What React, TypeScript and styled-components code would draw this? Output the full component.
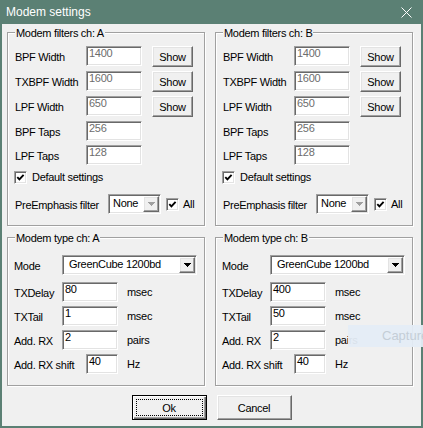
import React from 'react';
import styled, { createGlobalStyle, css } from 'styled-components';

interface FilterValues {
    bpfWidth: string;
    txbpfWidth: string;
    lpfWidth: string;
    bpfTaps: string;
    lpfTaps: string;
}

interface TypeValues {
    mode: string;
    txDelay: string;
    txTail: string;
    addRx: string;
    addRxShift: string;
}

interface Channel {
    name: string;
    filters: FilterValues;
    type: TypeValues;
}

const channels: Channel[] = [
    {
        name: 'A',
        filters: { bpfWidth: '1400', txbpfWidth: '1600', lpfWidth: '650', bpfTaps: '256', lpfTaps: '128' },
        type: { mode: 'GreenCube 1200bd', txDelay: '80', txTail: '1', addRx: '2', addRxShift: '40' },
    },
    {
        name: 'B',
        filters: { bpfWidth: '1400', txbpfWidth: '1600', lpfWidth: '650', bpfTaps: '256', lpfTaps: '128' },
        type: { mode: 'GreenCube 1200bd', txDelay: '400', txTail: '50', addRx: '2', addRxShift: '40' },
    },
];

const GlobalStyle = createGlobalStyle`
    html, body {
        margin: 0;
        padding: 0;
        background: #f0f0f0;
    }
    body {
        font-family: "Liberation Sans", Arial, sans-serif;
        font-size: 11px;
        letter-spacing: -0.3px;
        color: #000;
    }
    * {
        box-sizing: border-box;
    }
`

const Window = styled.div`
    position: relative;
    width: 423px;
    height: 428px;
    display: flex;
    flex-direction: column;
    background: #f0f0f0;
    border: 2px solid #5b8074;
    border-top: none;
`
const TitleBar = styled.div`
    flex: none;
    height: 24px;
    display: flex;
    align-items: center;
    justify-content: space-between;
    margin: 0 -2px;
    padding: 0 11px 0 6px;
    background: #5b8074;
    color: #fff;
    font-size: 12px;
    letter-spacing: 0;
`
const TitleText = styled.span`
    line-height: 16px;
`
const Body = styled.div`
    display: grid;
    grid-template-columns: 198px 198px;
    grid-template-rows: 194px 149px;
    column-gap: 10px;
    row-gap: 11px;
    padding: 8px 0 0 5px;
`
const Group = styled.div<{ $padTop: number; $padLeft: number }>`
    position: relative;
    display: flex;
    flex-direction: column;
    padding: ${p => p.$padTop}px 0 0 ${p => p.$padLeft}px;
    border: 1px solid #a0a0a0;
    box-shadow: 1px 1px 0 #fff, inset 1px 1px 0 #fff;
`
const Caption = styled.span`
    position: absolute;
    top: -6px;
    left: 7px;
    padding: 0 1px;
    line-height: 13px;
    background: #f0f0f0;
    white-space: nowrap;
`
const Stack = styled.div<{ $top?: number }>`
    display: flex;
    flex-direction: column;
    gap: 4px;
    margin-top: ${p => p.$top ?? 0}px;
`
const Row = styled.div<{ $top?: number; $left?: number }>`
    display: flex;
    align-items: flex-start;
    margin-top: ${p => p.$top ?? 0}px;
    margin-left: ${p => p.$left ?? 0}px;
`
const Label = styled.span<{ $width?: number }>`
    flex: none;
    width: ${p => (p.$width ? `${p.$width}px` : 'auto')};
    padding-top: 5px;
    line-height: 13px;
    white-space: nowrap;
`
const Unit = styled.span`
    padding: 4px 0 0 9px;
    line-height: 13px;
`
const sunken = css`
    border: 1px solid;
    border-color: #a0a0a0 #fff #fff #a0a0a0;
    box-shadow: inset 1px 1px 0 #696969, inset -1px -1px 0 #e3e3e3;
`
const raised = css`
    border: 1px solid;
    border-color: #fff #696969 #696969 #fff;
    box-shadow: inset -1px -1px 0 #a0a0a0, inset 1px 1px 0 #e3e3e3;
`
const TextBox = styled.div<{ $width: number; $disabled?: boolean }>`
    flex: none;
    width: ${p => p.$width}px;
    height: 20px;
    padding: 0 0 0 2px;
    line-height: 13px;
    background: #fff;
    color: ${p => (p.$disabled ? '#6d6d6d' : '#000')};
    ${sunken}
`
const PushButton = styled.button<{ $width: number; $height: number; $default?: boolean }>`
    flex: none;
    width: ${p => p.$width}px;
    height: ${p => p.$height}px;
    padding: 0;
    font: inherit;
    letter-spacing: inherit;
    color: #000;
    background: #f0f0f0;
    ${raised}
    ${p => p.$default && css`
        border: 1px solid #000;
        box-shadow: inset 1px 1px 0 #fff, inset -1px -1px 0 #696969, inset -2px -2px 0 #a0a0a0;
        outline: 1px dotted #000;
        outline-offset: -5px;
    `}
`
const ShowButton = styled(PushButton)`
    margin-left: 10px;
`
const Combo = styled.div<{ $width: number }>`
    flex: none;
    display: flex;
    width: ${p => p.$width}px;
    height: 20px;
    padding: 1px;
    background: #fff;
    ${sunken}
`
const ComboText = styled.span<{ $indent: number }>`
    flex: 1;
    padding: 1px 0 0 ${p => p.$indent}px;
    line-height: 13px;
    white-space: nowrap;
`
const ComboButton = styled.span`
    flex: none;
    width: 16px;
    display: flex;
    align-items: center;
    justify-content: center;
    background: #f0f0f0;
    ${raised}
`
const CheckBox = styled.span`
    flex: none;
    width: 13px;
    height: 13px;
    display: flex;
    align-items: center;
    justify-content: center;
    background: #fff;
    ${sunken}
`
const CheckText = styled.span<{ $gap: number }>`
    padding-left: ${p => p.$gap}px;
    line-height: 13px;
`
const ButtonBar = styled.div`
    display: flex;
    justify-content: center;
    gap: 10px;
    margin-top: 9px;
`
const CaptureHint = styled.div`
    position: absolute;
    z-index: 1;
    left: 346px;
    top: 325px;
    width: 77px;
    height: 22px;
    padding: 2px 0 0 34px;
    background: rgba(228, 236, 246, 0.95);
    color: #c4cdd7;
    font-family: "Liberation Sans", Arial, sans-serif;
    font-size: 13px;
    letter-spacing: 0;
    line-height: 17px;
    overflow: hidden;
    white-space: nowrap;
`

const Arrow: React.FC<{ disabled?: boolean }> = ({ disabled }) => (
    <svg width="7" height="4" viewBox="0 0 7 4" shapeRendering="crispEdges">
        <polygon points="0,0 7,0 3.5,4" fill={disabled ? '#a0a0a0' : '#000'} />
    </svg>
)

const Check: React.FC = () => (
    <CheckBox>
        <svg width="9" height="9" viewBox="0 0 9 9">
            <path d="M1.3 4.2 L3.4 6.4 L7.6 1.8" stroke="#000" strokeWidth="1.9" fill="none" />
        </svg>
    </CheckBox>
)

const FiltersGroup: React.FC<{ channel: Channel }> = ({ channel }) => {
    const f = channel.filters;
    const rows: [string, string, boolean][] = [
        ['BPF Width', f.bpfWidth, true],
        ['TXBPF Width', f.txbpfWidth, true],
        ['LPF Width', f.lpfWidth, true],
        ['BPF Taps', f.bpfTaps, false],
        ['LPF Taps', f.lpfTaps, false],
    ];

    return (
        <Group $padTop={13} $padLeft={7}>
            <Caption>Modem filters ch: {channel.name}</Caption>
            <Stack>
                {rows.map(([label, value, show]) => (
                    <Row key={label}>
                        <Label $width={71}>{label}</Label>
                        <TextBox $width={56} $disabled>{value}</TextBox>
                        {show && <ShowButton type="button" $width={41} $height={21}>Show</ShowButton>}
                    </Row>
                ))}
            </Stack>
            <Row $top={6} $left={-1}>
                <Check />
                <CheckText $gap={5}>Default settings</CheckText>
            </Row>
            <Row $top={10}>
                <Label $width={93}>PreEmphasis filter</Label>
                <Combo $width={53}>
                    <ComboText $indent={3}>None</ComboText>
                    <ComboButton><Arrow disabled /></ComboButton>
                </Combo>
                <Row $top={4} $left={5}>
                    <Check />
                    <CheckText $gap={4}>All</CheckText>
                </Row>
            </Row>
        </Group>
    )
}

const TypeGroup: React.FC<{ channel: Channel }> = ({ channel }) => {
    const t = channel.type;
    const rows: [string, string, string][] = [
        ['TXDelay', t.txDelay, 'msec'],
        ['TXTail', t.txTail, 'msec'],
        ['Add. RX', t.addRx, 'pairs'],
    ];

    return (
        <Group $padTop={17} $padLeft={6}>
            <Caption>Modem type ch: {channel.name}</Caption>
            <Row>
                <Label $width={48}>Mode</Label>
                <Combo $width={135}>
                    <ComboText $indent={5}>{t.mode}</ComboText>
                    <ComboButton><Arrow /></ComboButton>
                </Combo>
            </Row>
            <Stack $top={7}>
                {rows.map(([label, value, unit]) => (
                    <Row key={label}>
                        <Label $width={48}>{label}</Label>
                        <TextBox $width={56}>{value}</TextBox>
                        <Unit>{unit}</Unit>
                    </Row>
                ))}
                <Row>
                    <Label $width={72}>Add. RX shift</Label>
                    <TextBox $width={32}>{t.addRxShift}</TextBox>
                    <Unit>Hz</Unit>
                </Row>
            </Stack>
        </Group>
    )
}

const App: React.FC = () => {
    return (
        <>
            <GlobalStyle />
            <Window>
                <TitleBar>
                    <TitleText>Modem settings</TitleText>
                    <svg width="11" height="11" viewBox="0 0 11 11">
                        <path d="M0.5 0.5 L10.5 10.5 M10.5 0.5 L0.5 10.5" stroke="#fff" strokeWidth="1" />
                    </svg>
                </TitleBar>
                <Body>
                    {channels.map(ch => <FiltersGroup key={'f' + ch.name} channel={ch} />)}
                    {channels.map(ch => <TypeGroup key={'t' + ch.name} channel={ch} />)}
                </Body>
                <ButtonBar>
                    <PushButton type="button" $width={75} $height={25} $default>Ok</PushButton>
                    <PushButton type="button" $width={75} $height={25}>Cancel</PushButton>
                </ButtonBar>
                <CaptureHint>Capture</CaptureHint>
            </Window>
        </>
    )
}

export default App;
